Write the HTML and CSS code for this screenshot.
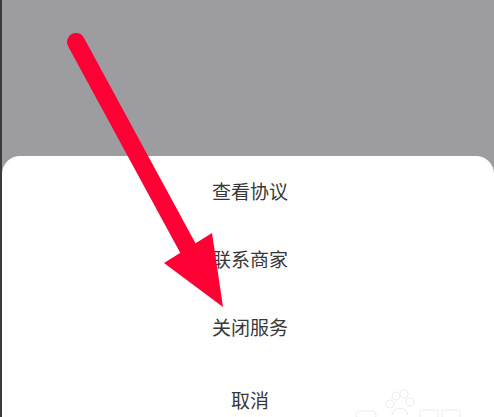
FILE: index.html
```html
<!DOCTYPE html>
<html lang="zh">
<head>
<meta charset="utf-8">
<title>服务菜单</title>
<link rel="stylesheet" href="styles.css">
</head>
<body>
<div class="screen">
  <div class="backdrop"></div>
  <div class="sheet">
    <div class="item">查看协议</div>
    <div class="item">联系商家</div>
    <div class="item">关闭服务</div>
    <div class="item cancel">取消</div>
  </div>
  <svg class="arrow" width="494" height="417" viewBox="0 0 494 417">
    <line x1="76" y1="42" x2="190" y2="252" stroke="#fe0034" stroke-width="18" stroke-linecap="round"/>
    <polygon points="164,263 212,233 223,307" fill="#fe0034"/>
  </svg>
  <svg class="watermark" width="110" height="30" viewBox="0 0 110 30">
    <g fill="none" stroke="#eeeeee" stroke-width="1.2">
      <circle cx="42" cy="9" r="4"/>
      <circle cx="50" cy="7" r="4"/>
      <circle cx="36" cy="17" r="4"/>
      <circle cx="56" cy="15" r="4"/>
      <path d="M38 28 C40 19 52 19 54 28"/>
      <rect x="2" y="24" width="20" height="8" rx="4"/>
      <rect x="66" y="23" width="18" height="10" rx="2"/>
      <rect x="88" y="23" width="18" height="10" rx="2"/>
    </g>
  </svg>
</div>
</body>
</html>
```
FILE: styles.css
```css
html, body {
  margin: 0;
  padding: 0;
}
body {
  width: 494px;
  height: 417px;
  overflow: hidden;
  font-family: "Noto Sans CJK SC", "Noto Sans", sans-serif;
}
.screen {
  position: relative;
  box-sizing: border-box;
  width: 494px;
  height: 417px;
  display: flex;
  flex-direction: column;
  background: #9d9ca1;
  border-left: 2px solid #3a3a3a;
  overflow: hidden;
}
.backdrop {
  height: 156px;
  flex: none;
}
.sheet {
  flex: 1;
  background: #ffffff;
  border-radius: 18px 18px 0 0;
  display: flex;
  flex-direction: column;
}
.item {
  height: 68px;
  display: flex;
  align-items: center;
  justify-content: center;
  font-size: 19px;
  color: #383838;
  padding-left: 4px;
}
.cancel {
  margin-top: 5px;
}
.arrow {
  position: absolute;
  left: -2px;
  top: 0;
}
.watermark {
  position: absolute;
  right: 30px;
  bottom: 0;
}
```
